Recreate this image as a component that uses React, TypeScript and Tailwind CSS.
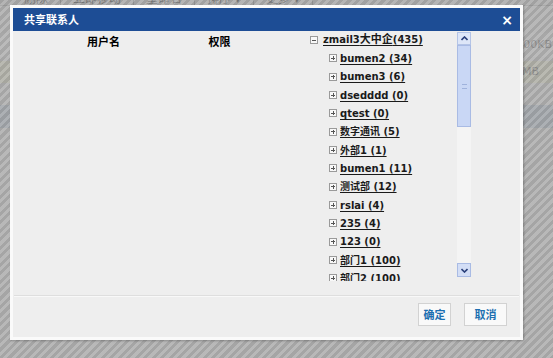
import React from "react";

const items = [
  "bumen2 (34)",
  "bumen3 (6)",
  "dsedddd (0)",
  "qtest (0)",
  "数字通讯 (5)",
  "外部1 (1)",
  "bumen1 (11)",
  "测试部 (12)",
  "rslai (4)",
  "235 (4)",
  "123 (0)",
  "部门1 (100)",
  "部门2 (100)",
];

const font = { fontFamily: '"DejaVu Sans", Verdana, "Noto Sans CJK SC", sans-serif' };
const cjk = { fontFamily: '"Noto Sans CJK SC", sans-serif' };

function Box({ plus }: { plus: boolean }) {
  return (
    <span className="relative inline-block w-[8px] h-[8px] border border-[#9a9a9a] bg-[#f8f8f8] shrink-0">
      <span className="absolute left-[1px] top-[2.5px] w-[4px] h-[1px] bg-[#555]" />
      {plus && <span className="absolute left-[2.5px] top-[1px] w-[1px] h-[4px] bg-[#555]" />}
    </span>
  );
}

export default function App() {
  return (
    <div className="relative w-[553px] h-[358px] overflow-hidden bg-[#f2f2f2]" style={font}>
      {/* underlying page */}
      <div className="flex flex-col">
        <div className="h-[6px] overflow-hidden bg-[#e4e4e4] border-b border-[#b8b8b8] flex text-[12px] text-[#333]">
          {["删除", "立即移动", "重命名", "排序 ▾", "更多 ▾"].map((t, i) => (
            <div key={i} className="-mt-[8px] px-[12px] border-r border-[#999] leading-[14px] first:pl-[24px]">
              {t}
            </div>
          ))}
        </div>
        <div className="h-[27px]" />
        <div className="h-[24px] bg-[#fbfbfb] flex justify-end items-center pr-[1px] text-[11px] text-[#777]">100KB</div>
        <div className="h-[4px]" />
        <div className="h-[22px] bg-[#f6f6d8] flex justify-end items-center pr-[14px] text-[11px] text-[#777]">2MB</div>
        <div className="h-[22px]" />
        <div className="h-[23px] bg-[#c4d2e2]" />
      </div>

      {/* mask */}
      <div className="absolute inset-0 opacity-[0.74] bg-[repeating-linear-gradient(135deg,#8a8a8a_0px,#8a8a8a_3px,#a4a4a4_3px,#a4a4a4_6px)]" />

      {/* dialog */}
      <div className="absolute left-[10px] top-[5px] w-[513px] h-[335px] bg-[#fafafa] p-[3px] shadow-[1px_1px_2px_rgba(0,0,0,0.25)] flex flex-col">
        <div className="h-[23px] bg-[#1d4d95] flex items-center justify-between pl-[11px] pr-[7px] shrink-0">
          <span className="text-white font-bold text-[11px]" style={cjk}>
            共享联系人
          </span>
          <span className="text-white font-bold text-[14px] leading-none">×</span>
        </div>
        <div className="flex-1 bg-[#eeeeee] flex flex-col">
          <div className="flex h-[252px]">
            <div className="w-[292px] flex items-start text-[11px] font-bold text-black h-[20px]" style={cjk}>
              <div className="w-[181px] text-center leading-[20px]">用户名</div>
              <div className="w-[51px] text-center leading-[20px]">权限</div>
            </div>
            <div className="w-[152px] h-[250px] overflow-hidden text-[10px] font-bold text-[#1a1a1a]">
              <div className="flex items-center h-[18.33px] pl-[5px] gap-[5px]">
                <Box plus={false} />
                <span className="underline underline-offset-2">
                  zmail3<span className="text-[11px]">大中企</span>(435)
                </span>
              </div>
              {items.map((t) => (
                <div key={t} className="flex items-center h-[18.33px] pl-[24px] gap-[3px]">
                  <Box plus={true} />
                  <span className="underline underline-offset-2">{t}</span>
                </div>
              ))}
            </div>
            <div className="w-[14px] h-[245px] mt-[1px] bg-[#f4f4f4] flex flex-col">
              <div className="h-[13px] bg-[#dde6f8] border border-[#b4c4e6] flex items-center justify-center">
                <svg width="7" height="5" viewBox="0 0 7 5"><path d="M0.5 4 L3.5 1 L6.5 4" stroke="#2a3f7a" strokeWidth="1.6" fill="none" /></svg>
              </div>
              <div className="h-[82px] bg-[#c9d7f5] border border-[#a9bbe4] flex items-center justify-center">
                <div className="w-[5px] h-[5px] border-y border-[#9fb2dc]" />
              </div>
              <div className="flex-1" />
              <div className="h-[14px] bg-[#d3def6] border border-[#a9bbe4] flex items-center justify-center">
                <svg width="7" height="5" viewBox="0 0 7 5"><path d="M0.5 1 L3.5 4 L6.5 1" stroke="#2a3f7a" strokeWidth="1.6" fill="none" /></svg>
              </div>
            </div>
          </div>
          <div className="mt-[12px] mx-[1px] border-t border-[#dedede] border-b border-b-[#f8f8f8]" />
          <div className="flex justify-end gap-[13px] pr-[13px] pt-[6px]">
            <button className="w-[33px] h-[23px] bg-[#f9f9f9] border border-[#d2d2d2] text-[11px] font-bold text-[#1d6fb0]" style={cjk}>
              确定
            </button>
            <button className="w-[43px] h-[23px] bg-[#f9f9f9] border border-[#d2d2d2] text-[11px] font-bold text-[#1d6fb0]" style={cjk}>
              取消
            </button>
          </div>
        </div>
      </div>
    </div>
  );
}
